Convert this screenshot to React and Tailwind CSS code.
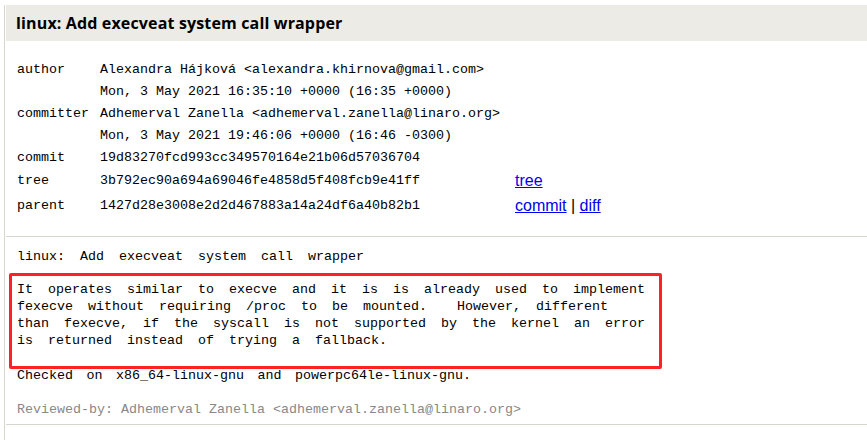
import React from 'react';

const mono = "font-['Liberation_Mono','DejaVu_Sans_Mono',monospace] text-[13.33px]";

// commit header rows: label / value / optional links
const rows = [
  { label: 'author', value: 'Alexandra Hájková <alexandra.khirnova@gmail.com>', h: 'h-[22px]' },
  { label: '', value: 'Mon, 3 May 2021 16:35:10 +0000 (16:35 +0000)', h: 'h-[22px]' },
  { label: 'committer', value: 'Adhemerval Zanella <adhemerval.zanella@linaro.org>', h: 'h-[22px]' },
  { label: '', value: 'Mon, 3 May 2021 19:46:06 +0000 (16:46 -0300)', h: 'h-[22px]' },
  { label: 'commit', value: '19d83270fcd993cc349570164e21b06d57036704', h: 'h-[22px]' },
  { label: 'tree', value: '3b792ec90a694a69046fe4858d5f408fcb9e41ff', h: 'h-[23px]', links: ['tree'] },
  { label: 'parent', value: '1427d28e3008e2d2d467883a14a24df6a40b82b1', h: 'h-[27px]', links: ['commit', 'diff'] },
];

const CommitLink = ({ children }) => (
  <a href="#" className="text-[#0000ee] underline">
    {children}
  </a>
);

const App = () => {
  return (
    <div className="min-h-[440px] bg-white text-black overflow-hidden">
      <div className="ml-[4px] min-h-[440px] border-l border-[#d6d6ce] pl-[1px]">
        {/* subject bar */}
        <div className="mt-[5px] h-[36px] bg-[#ecebe6] pl-[10px] flex items-center">
          <h1 className="font-['Open_Sans',sans-serif] font-bold text-[16px] tracking-[0.15px]">
            linux: Add execveat system call wrapper
          </h1>
        </div>

        {/* commit info */}
        <div className="mt-[18px] pl-[11px] pb-[17px]">
          {rows.map((row, i) => (
            <div key={i} className={`flex items-center ${row.h}`}>
              <div className={`w-[83px] ${mono}`}>{row.label}</div>
              <div className={`w-[415px] whitespace-pre ${mono}`}>{row.value}</div>
              {row.links && (
                <div className="font-['Liberation_Sans',Arial,sans-serif] text-[16px] whitespace-pre">
                  {row.links.length === 1 ? (
                    <CommitLink>{row.links[0]}</CommitLink>
                  ) : (
                    <>
                      <CommitLink>{row.links[0]}</CommitLink>
                      {' | '}
                      <CommitLink>{row.links[1]}</CommitLink>
                    </>
                  )}
                </div>
              )}
            </div>
          ))}
        </div>

        {/* commit message */}
        <div className={`border-t border-[#d6d6ce] pt-[11px] pl-[11px] pb-[6px] leading-[17px] whitespace-pre ${mono}`}>
          <div className="[word-spacing:7px]">linux: Add execveat system call wrapper</div>
          <div className="mt-[8px] ml-[-8px] w-[653px] border-[3px] border-[#ff2222] rounded-[2px] pl-[5px] pt-[5px] mb-[-2px] [word-spacing:7px]">
            <div>It operates similar to execve and it is is already used to implement</div>
            <div>fexecve without requiring /proc to be mounted.  However, different</div>
            <div>than fexecve, if the syscall is not supported by the kernel an error</div>
            <div>is returned instead of trying a fallback.</div>
            <div>&nbsp;</div>
          </div>
          <div className="[word-spacing:5.5px]">Checked on x86_64-linux-gnu and powerpc64le-linux-gnu.</div>
          <div>&nbsp;</div>
          <div className="text-[#888888]">Reviewed-by: Adhemerval Zanella &lt;adhemerval.zanella@linaro.org&gt;</div>
        </div>

        {/* diffstat (cut off at page edge) */}
        <div className="border-t border-[#d6d6ce] pt-[12px] pl-[40px] font-['Liberation_Sans',Arial,sans-serif] text-[16px] font-bold">
          Diffstat
        </div>
      </div>
    </div>
  );
};

export default App;
